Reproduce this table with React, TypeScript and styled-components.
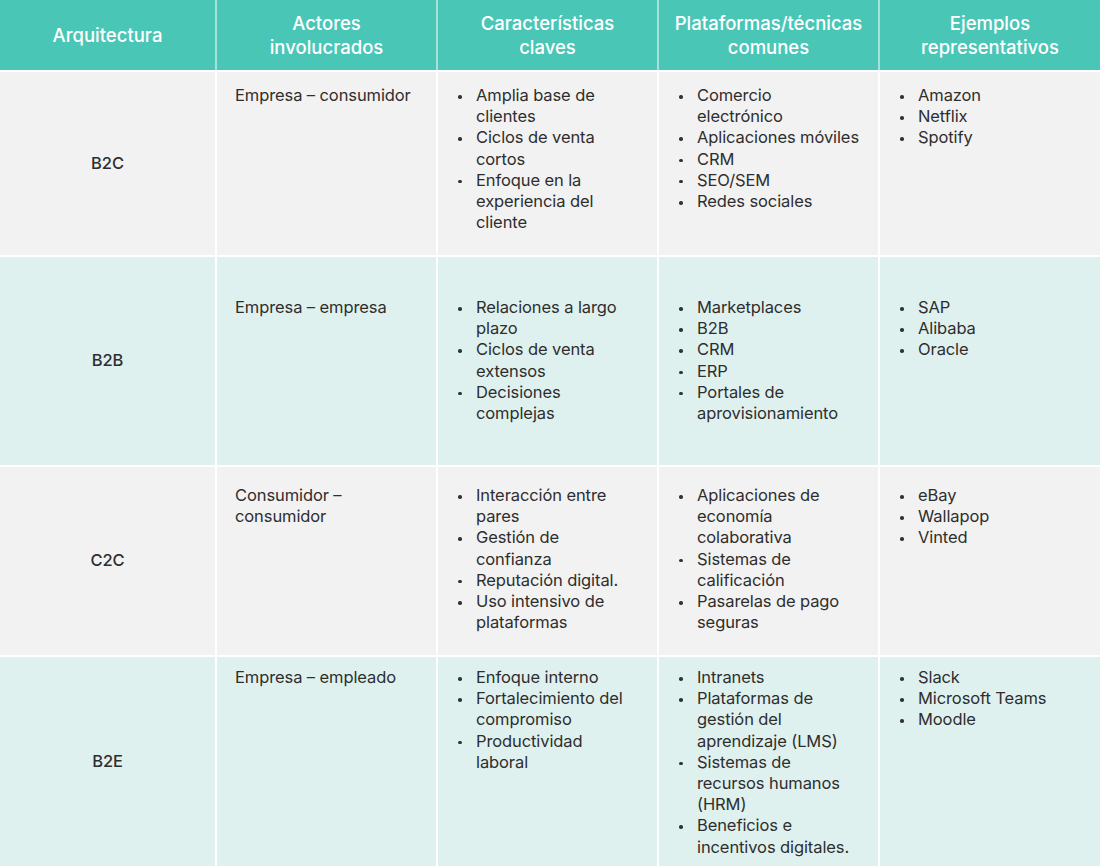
import React from 'react';
import styled, { createGlobalStyle } from 'styled-components';

const GlobalStyle = createGlobalStyle`
  html, body {
    margin: 0;
    padding: 0;
    background: #ffffff;
  }
  body {
    font-family: "Inter", "Liberation Sans", sans-serif;
    color: #2e2e2e;
  }
`;

const Table = styled.div`
  width: 1100px;
  display: grid;
  grid-template-columns: 215px 219px 219px 219px 220px;
  grid-template-rows: 70px 183px 208px 188px 209px;
  column-gap: 2px;
  row-gap: 2px;
  padding-bottom: 2px;
  background: #ffffff;
`;

const HeadCell = styled.div`
  background: #4ac6b7;
  color: #ffffff;
  font-size: 18.5px;
  font-weight: 500;
  line-height: 24px;
  text-align: center;
  display: flex;
  align-items: center;
  justify-content: center;
  padding: 0 22px;
  box-shadow: 2px 0 0 #a6e2d9;
`;

const Cell = styled.div<{ $tone: 'gray' | 'teal'; $top: number }>`
  background: ${({ $tone }) => ($tone === 'gray' ? '#f2f2f2' : '#dff1ef')};
  padding: ${({ $top }) => $top}px 16px 0 18px;
  font-size: 16.5px;
  line-height: 21.2px;
  letter-spacing: -0.1px;
`;

const NameCell = styled(Cell)`
  display: flex;
  align-items: center;
  justify-content: center;
  padding: 0;
  font-weight: 500;
`;

const ListCell = styled(Cell)<{ $right: number }>`
  padding-left: 0;
  padding-right: ${({ $right }) => $right}px;
`;

const List = styled.ul`
  list-style: none;
  margin: 0;
  padding: 0 0 0 20px;
`;

const Item = styled.li`
  position: relative;
  padding-left: 18px;

  &::before {
    content: '';
    position: absolute;
    left: 0;
    top: 10px;
    width: 3.5px;
    height: 3.5px;
    border-radius: 50%;
    background: #333333;
  }
`;

type Row = {
  name: string;
  actors: string;
  features: string[];
  platforms: string[];
  examples: string[];
  tone: 'gray' | 'teal';
  top: number;
};

const headers = [
  'Arquitectura',
  'Actores involucrados',
  'Características claves',
  'Plataformas/técnicas comunes',
  'Ejemplos representativos',
];

const rows: Row[] = [
  {
    name: 'B2C',
    actors: 'Empresa – consumidor',
    features: ['Amplia base de clientes', 'Ciclos de venta cortos', 'Enfoque en la experiencia del cliente'],
    platforms: ['Comercio electrónico', 'Aplicaciones móviles', 'CRM', 'SEO/SEM', 'Redes sociales'],
    examples: ['Amazon', 'Netflix', 'Spotify'],
    tone: 'gray',
    top: 13,
  },
  {
    name: 'B2B',
    actors: 'Empresa – empresa',
    features: ['Relaciones a largo plazo', 'Ciclos de venta extensos', 'Decisiones complejas'],
    platforms: ['Marketplaces', 'B2B', 'CRM', 'ERP', 'Portales de aprovisionamiento'],
    examples: ['SAP', 'Alibaba', 'Oracle'],
    tone: 'teal',
    top: 40,
  },
  {
    name: 'C2C',
    actors: 'Consumidor – consumidor',
    features: ['Interacción entre pares', 'Gestión de confianza', 'Reputación digital.', 'Uso intensivo de plataformas'],
    platforms: ['Aplicaciones de economía colaborativa', 'Sistemas de calificación', 'Pasarelas de pago seguras'],
    examples: ['eBay', 'Wallapop', 'Vinted'],
    tone: 'gray',
    top: 18,
  },
  {
    name: 'B2E',
    actors: 'Empresa – empleado',
    features: ['Enfoque interno', 'Fortalecimiento del compromiso', 'Productividad laboral'],
    platforms: [
      'Intranets',
      'Plataformas de gestión del aprendizaje (LMS)',
      'Sistemas de recursos humanos (HRM)',
      'Beneficios e incentivos digitales.',
    ],
    examples: ['Slack', 'Microsoft Teams', 'Moodle'],
    tone: 'teal',
    top: 10,
  },
];

const Bullets: React.FC<{ items: string[] }> = ({ items }) => (
  <List>
    {items.map((t) => (
      <Item key={t}>{t}</Item>
    ))}
  </List>
);

const App: React.FC = () => {
  return (
    <>
      <GlobalStyle />
      <Table>
        {headers.map((h) => (
          <HeadCell key={h}>{h}</HeadCell>
        ))}
        {rows.map((r) => (
          <React.Fragment key={r.name}>
            <NameCell $tone={r.tone} $top={0}>
              {r.name}
            </NameCell>
            <Cell $tone={r.tone} $top={r.top}>
              {r.actors}
            </Cell>
            <ListCell $tone={r.tone} $top={r.top} $right={26}>
              <Bullets items={r.features} />
            </ListCell>
            <ListCell $tone={r.tone} $top={r.top} $right={17}>
              <Bullets items={r.platforms} />
            </ListCell>
            <ListCell $tone={r.tone} $top={r.top} $right={16}>
              <Bullets items={r.examples} />
            </ListCell>
          </React.Fragment>
        ))}
      </Table>
    </>
  );
};

export default App;
